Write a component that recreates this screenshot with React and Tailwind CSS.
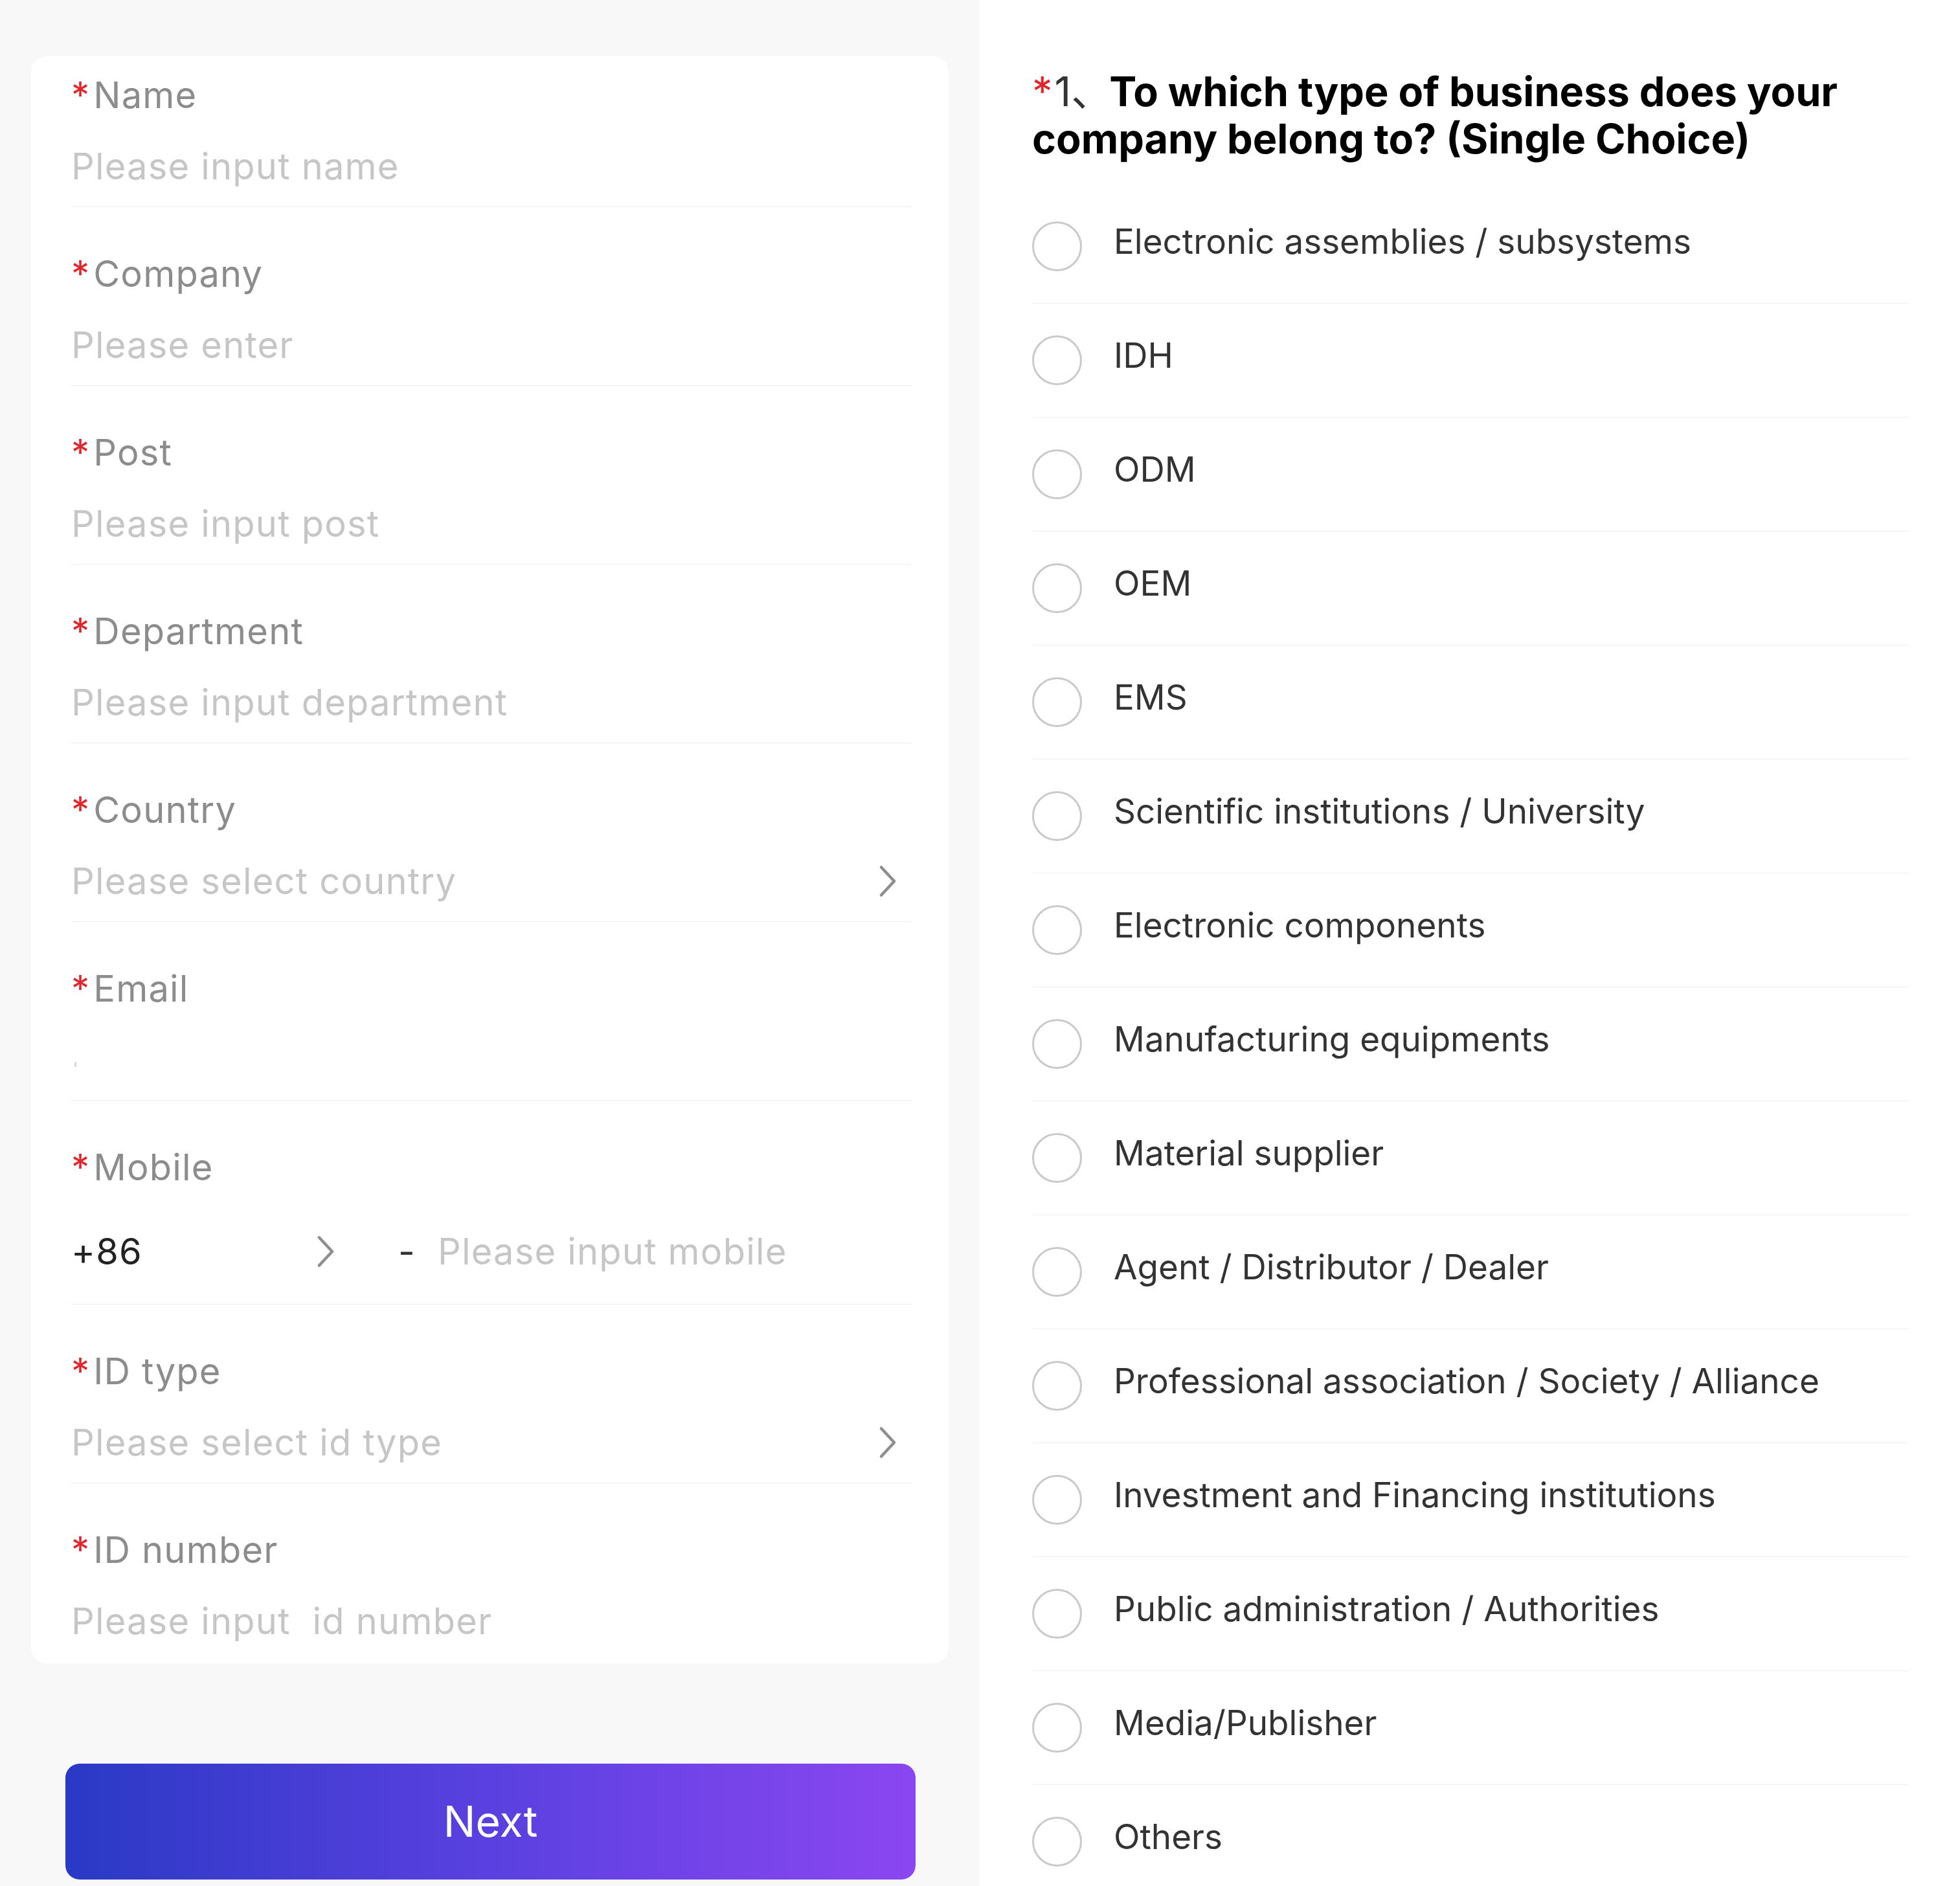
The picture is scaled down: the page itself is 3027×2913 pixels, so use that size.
import React from 'react';

const options = [
    'Electronic assemblies / subsystems',
    'IDH',
    'ODM',
    'OEM',
    'EMS',
    'Scientific institutions / University',
    'Electronic components',
    'Manufacturing equipments',
    'Material supplier',
    'Agent / Distributor / Dealer',
    'Professional association / Society / Alliance',
    'Investment and Financing institutions',
    'Public administration / Authorities',
    'Media/Publisher',
    'Others',
];

// chevron used by the select rows
function Chevron() {
    return (
        <svg width="28" height="50" viewBox="0 0 28 50" fill="none">
            <path d="M4 3.5L24 25L4 46.5" stroke="#8e8e8e" strokeWidth="4.5" strokeLinecap="round" strokeLinejoin="round" />
        </svg>
    );
}

function Field({ label, first, last, mobile, children }) {
    return (
        <div className={first ? '' : 'pt-[71px]'}>
            <div className="flex h-[64px] items-center text-[56px] leading-[64px] tracking-[1.2px] text-[#8c8c8c]">
                <span className="mr-[5px] text-[#e0262b]">*</span>
                <span>{label}</span>
            </div>
            <div className={mobile ? 'mt-[66px]' : 'mt-[46px]'}>{children}</div>
            {!last && <div className={mobile ? 'mt-[49px] border-b border-[#ededed]' : 'mt-[30px] border-b border-[#ededed]'} />}
        </div>
    );
}

function Placeholder({ text }) {
    return <div className="h-[64px] text-[56px] leading-[64px] tracking-[1.2px] text-[#c6c6c6]">{text}</div>;
}

export default function App() {
    return (
        <div className="flex h-[2913px] w-[3027px] overflow-hidden font-['Inter','Noto_Sans_CJK_SC',sans-serif]">
            {/* Left: personal info form */}
            <div className="w-[1513px] shrink-0 bg-[#f8f8f8] pt-[87px]">
                <div className="mx-[48px] rounded-[24px] bg-white pb-[33px] pl-[62px] pr-[58px] pt-[28px]">
                    <Field label="Name" first>
                        <Placeholder text="Please input name" />
                    </Field>
                    <Field label="Company">
                        <Placeholder text="Please enter" />
                    </Field>
                    <Field label="Post">
                        <Placeholder text="Please input post" />
                    </Field>
                    <Field label="Department">
                        <Placeholder text="Please input department" />
                    </Field>
                    <Field label="Country">
                        <div className="flex h-[64px] items-center justify-between pr-[22px]">
                            <span className="text-[56px] leading-[64px] tracking-[1.2px] text-[#c6c6c6]">Please select country</span>
                            <Chevron />
                        </div>
                    </Field>
                    <Field label="Email">
                        <div className="flex h-[64px] items-center">
                            <div className="ml-[5px] mt-[14px] h-[8px] w-[3px] rounded-full bg-[#d6d6d6]" />
                        </div>
                    </Field>
                    <Field label="Mobile" mobile>
                        <div className="flex h-[64px] items-center text-[56px] leading-[64px] tracking-[1.2px]">
                            <div className="flex w-[407px] items-center justify-between">
                                <span className="text-[#222]">+86</span>
                                <Chevron />
                            </div>
                            <span className="ml-[98px] text-[#333]">-</span>
                            <span className="ml-[34px] text-[#c6c6c6]">Please input mobile</span>
                        </div>
                    </Field>
                    <Field label="ID type">
                        <div className="flex h-[64px] items-center justify-between pr-[22px]">
                            <span className="text-[56px] leading-[64px] tracking-[1.2px] text-[#c6c6c6]">Please select id type</span>
                            <Chevron />
                        </div>
                    </Field>
                    <Field label="ID number" last>
                        <div className="h-[64px] whitespace-pre text-[56px] leading-[64px] tracking-[1.2px] text-[#c6c6c6]">Please input  id number</div>
                    </Field>
                </div>

                <button className="ml-[101px] mt-[155px] flex h-[179px] w-[1313px] items-center justify-center rounded-[22px] bg-linear-to-r from-[#2939c6] via-[#5a40e0] to-[#8b46f1] text-[66px] text-white">
                    Next
                </button>
            </div>

            {/* Right: single choice question */}
            <div className="flex-1 bg-white pl-[81px] pr-[79px] pt-[105px]">
                <h2 className="text-[63px] leading-[73px] text-black">
                    <span className="text-[#e0262b]">*</span>
                    <span className="ml-[3px] font-normal text-[#333]">1、</span>
                    <span className="-ml-[4px] font-bold">To which type of business does your</span>
                    <br />
                    <span className="font-bold">company belong to? (Single Choice)</span>
                </h2>
                <div className="mt-[42px]">
                    {options.map((opt) => (
                        <div key={opt} className="flex h-[176px] items-center border-b border-[#f1f1f1]">
                            <div className="h-[77px] w-[77px] shrink-0 rounded-full border-[3px] border-[#cacaca]" />
                            <span className="ml-[49px] pb-[14px] text-[53px] text-[#333]">{opt}</span>
                        </div>
                    ))}
                </div>
            </div>
        </div>
    );
}
